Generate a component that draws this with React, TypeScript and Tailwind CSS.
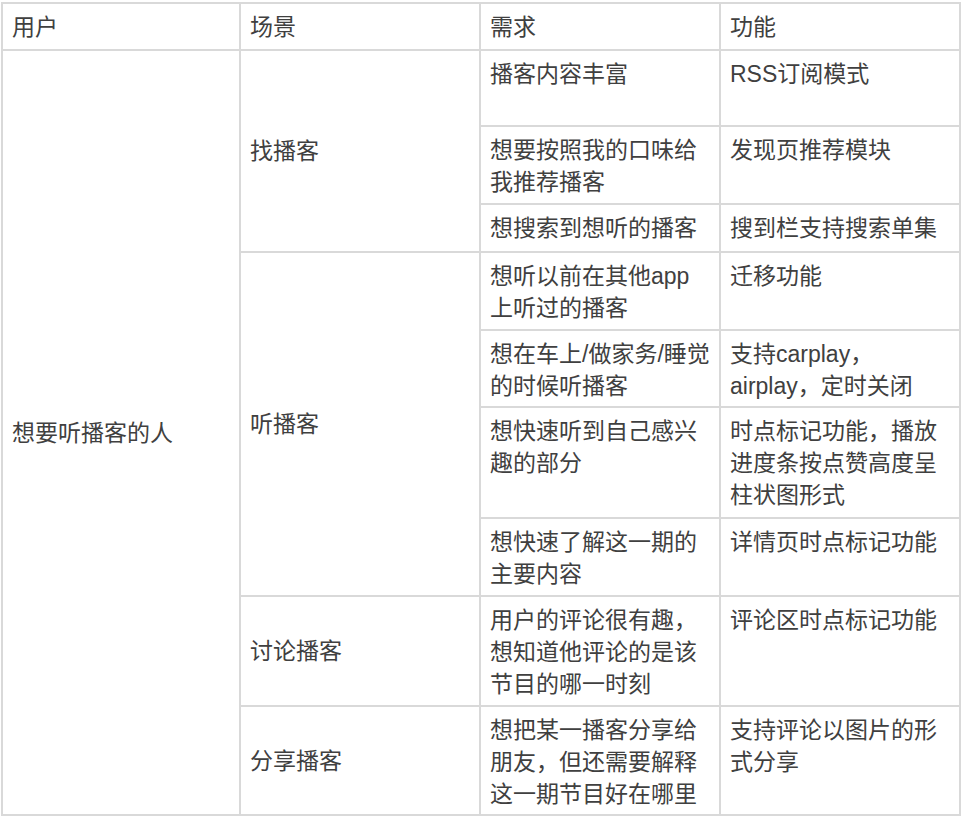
import React from 'react';

type Row = {
  user?: { text: string; span: number };
  scene?: { text: string; span: number };
  need: string[];
  feature: string[];
  h: string;
};

const rows: Row[] = [
  {
    user: { text: '想要听播客的人', span: 9 },
    scene: { text: '找播客', span: 3 },
    need: ['播客内容丰富'],
    feature: ['RSS订阅模式'],
    h: 'h-[76px]',
  },
  { need: ['想要按照我的口味给', '我推荐播客'], feature: ['发现页推荐模块'], h: 'h-[78px]' },
  { need: ['想搜索到想听的播客'], feature: ['搜到栏支持搜索单集'], h: 'h-[48px]' },
  {
    scene: { text: '听播客', span: 4 },
    need: ['想听以前在其他app', '上听过的播客'],
    feature: ['迁移功能'],
    h: 'h-[78px]',
  },
  {
    need: ['想在车上/做家务/睡觉', '的时候听播客'],
    feature: ['支持carplay，', 'airplay，定时关闭'],
    h: 'h-[77px]',
  },
  {
    need: ['想快速听到自己感兴', '趣的部分'],
    feature: ['时点标记功能，播放', '进度条按点赞高度呈', '柱状图形式'],
    h: 'h-[111px]',
  },
  { need: ['想快速了解这一期的', '主要内容'], feature: ['详情页时点标记功能'], h: 'h-[78px]' },
  {
    scene: { text: '讨论播客', span: 1 },
    need: ['用户的评论很有趣，', '想知道他评论的是该', '节目的哪一时刻'],
    feature: ['评论区时点标记功能'],
    h: 'h-[110px]',
  },
  {
    scene: { text: '分享播客', span: 1 },
    need: ['想把某一播客分享给', '朋友，但还需要解释', '这一期节目好在哪里'],
    feature: ['支持评论以图片的形', '式分享'],
    h: 'h-[109px]',
  },
];

const cell = 'border-r-2 border-b-2 border-[#d9d9d9] pl-[9px] pr-[5px] p-0';

const Lines = ({ lines }: { lines: string[] }) => (
  <>
    {lines.map(l => (
      <span key={l} className="block whitespace-nowrap">{l}</span>
    ))}
  </>
);

export default function App() {
  return (
    <div className="min-h-screen bg-white pt-[2px] pl-[1px]">
      <table
        className="table-fixed border-separate border-spacing-0 border-l-2 border-t-2 border-[#d9d9d9] w-[960px] text-[23px] leading-[32px] text-[#404040]"
        style={{ fontFamily: '"Liberation Sans", "Noto Sans CJK SC", sans-serif' }}
      >
        <colgroup>
          <col className="w-[238px]" />
          <col className="w-[240px]" />
          <col className="w-[240px]" />
          <col className="w-[240px]" />
        </colgroup>
        <thead>
          <tr className="h-[47px]">
            {['用户', '场景', '需求', '功能'].map(t => (
              <th key={t} className={`${cell} text-left font-normal align-middle`}>{t}</th>
            ))}
          </tr>
        </thead>
        <tbody>
          {rows.map((r, i) => (
            <tr key={i} className={r.h}>
              {r.user && (
                <td rowSpan={r.user.span} className={`${cell} align-middle`}>{r.user.text}</td>
              )}
              {r.scene && (
                <td rowSpan={r.scene.span} className={`${cell} align-middle`}>{r.scene.text}</td>
              )}
              <td className={`${cell} align-top pt-[7px]`}>
                <Lines lines={r.need} />
              </td>
              <td className={`${cell} align-top pt-[7px]`}>
                <Lines lines={r.feature} />
              </td>
            </tr>
          ))}
        </tbody>
      </table>
    </div>
  );
}
